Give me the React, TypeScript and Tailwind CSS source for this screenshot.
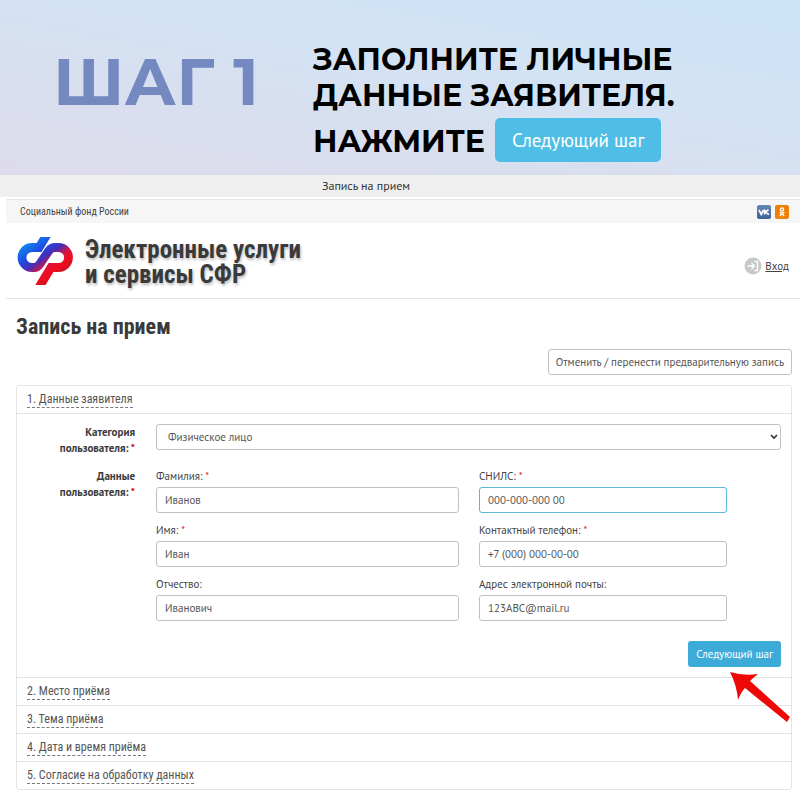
import React from "react";

const body = "font-['PT_Sans','Noto_Sans',sans-serif]";
const condensed = "font-['Roboto_Condensed','Liberation_Sans_Narrow',Roboto,sans-serif]";
const display = "font-['Montserrat',Inter,sans-serif]";

const control =
  "block h-[26px] w-full rounded-[3px] border bg-white text-[11px] leading-4 text-[#555] outline-none";

function Star() {
  return <span className="text-[#e02020]">*</span>;
}

type FieldProps = {
  id: string;
  label: string;
  value: string;
  type?: string;
  required?: boolean;
  active?: boolean;
};

function Field({ id, label, value, type = "text", required, active }: FieldProps) {
  return (
    <div>
      <label htmlFor={id} className="mb-[3px] block text-[11px] leading-4 text-[#444]">
        {label} {required && <Star />}
      </label>
      <input
        id={id}
        type={type}
        defaultValue={value}
        className={`${control} px-2 ${active ? "border-[#5bb8d0]" : "border-[#c0c0c8]"}`}
      />
    </div>
  );
}

function Logo() {
  return (
    <svg viewBox="0 0 56 48" className="h-12 w-14 shrink-0 overflow-hidden" aria-hidden="true">
      <defs>
        <linearGradient id="ribbon" x1="13" y1="2" x2="40" y2="40" gradientUnits="userSpaceOnUse">
          <stop offset="0" stopColor="#108cf2" />
          <stop offset="0.32" stopColor="#1f48e0" />
          <stop offset="0.5" stopColor="#4a2cb4" />
          <stop offset="0.68" stopColor="#d8143c" />
          <stop offset="0.82" stopColor="#f20c20" />
          <stop offset="1" stopColor="#cc1420" />
        </linearGradient>
      </defs>
      <path
        d="M30.9 -4L22 10.5H15A10 10 0 0 0 15 30.5H17Q20.5 30.5 22.5 27.5L32 13.5Q34.5 10.5 38 10.5H41.5A10 10 0 0 1 41.5 30.5H34L21 52"
        fill="none"
        stroke="url(#ribbon)"
        strokeWidth="8.8"
      />
    </svg>
  );
}

function SectionTitle({ children }: { children: React.ReactNode }) {
  return (
    <h2 className="flex h-7 items-center px-[10px] last:h-[27px]">
      <button
        type="button"
        className={`${condensed} border-b border-dashed border-[#777] text-[12px] leading-4 text-[#555]`}
      >
        {children}
      </button>
    </h2>
  );
}

export default function App() {
  return (
    <div className={`${body} min-h-screen bg-white text-[#444]`}>
      <section className="flex h-[175px] bg-[linear-gradient(10deg,#dddbeb_0%,#dadeee_25%,#d2e3f4_65%,#cbe2f7_100%)]">
        <div className={`${display} w-[313px] shrink-0 pt-[42px] pl-[53px] text-[65px] leading-[80px] font-bold text-[#7389c0]`}>
          ШАГ 1
        </div>
        <div className={`${display} pt-[42px] text-[30px] leading-9 font-bold text-black`}>
          <p>ЗАПОЛНИТЕ ЛИЧНЫЕ</p>
          <p>ДАННЫЕ ЗАЯВИТЕЛЯ.</p>
          <p className="mt-1 flex items-center gap-[10px]">
            <span className="pt-1">НАЖМИТЕ</span>
            <button type="button" className={`${body} h-11 rounded-[5px] bg-[#4fbee6] px-[17px] text-[19px] leading-6 font-normal text-white`}>
              Следующий шаг
            </button>
          </p>
        </div>
      </section>

      <div className="flex h-[22px] items-center justify-center bg-[#efefef] pr-[68px] text-[12px] leading-4 text-[#333]">
        Запись на прием
      </div>

      <div className="mt-[2px] ml-[6px]">
        <div className="flex h-6 items-center justify-between border-t border-[#e8e8e8] bg-[#f6f6f6] pr-[11px] pl-[14px]">
          <span className={`${condensed} text-[10px] leading-4`}>Социальный фонд России</span>
          <div className="flex gap-1">
            <a href="#vk" aria-label="ВКонтакте" className="size-[14px] rounded-[2px] bg-linear-to-b from-[#6388b5] to-[#3c6291]">
              <svg viewBox="0 0 14 14" className="size-full fill-none stroke-white" strokeWidth="1.7">
                <path d="M2 5L4.3 9.3L6.3 5M7.5 4.5V9.5M11.5 4.7L8 7L12 9.6" />
              </svg>
            </a>
            <a href="#ok" aria-label="Одноклассники" className="size-[14px] rounded-[2px] bg-[#ee8208]">
              <svg viewBox="0 0 14 14" className="size-full fill-none stroke-white" strokeWidth="1.3">
                <circle cx="7" cy="4.5" r="1.6" />
                <path d="M4.7 7.3C6 8.4 8 8.4 9.3 7.3M7 8.2L4.9 11M7 8.2L9.1 11" />
              </svg>
            </a>
          </div>
        </div>

        <header className="flex h-[76px] items-center justify-between border-b border-[#e4e4e4] pr-[11px] pl-[11px]">
          <div className="flex items-center gap-3">
            <Logo />
            <div className={`${condensed} pt-[2px] text-[25px] leading-[25px] font-bold text-[#3a3a3a] [text-shadow:1px_2px_3px_#bbb]`}>
              Электронные услуги
              <br />и сервисы СФР
            </div>
          </div>
          <a href="#login" className="mt-[10px] flex items-center gap-[3px] text-[11px] leading-4">
            <svg viewBox="0 0 18 18" className="size-[18px] fill-none stroke-white" strokeWidth="1.3" aria-hidden="true">
              <circle cx="9" cy="9" r="8.5" fill="#c8c8c8" stroke="none" />
              <path d="M3.5 9H10M7.5 6L10.5 9L7.5 12M10.5 4.5H13.5V13.5H10.5" />
            </svg>
            <span className="underline">Вход</span>
          </a>
        </header>
      </div>

      <main className="pt-[14px] pr-2 pb-[10px] pl-4">
        <h1 className={`${condensed} text-[22px] leading-7 font-bold text-[#3a3a3a]`}>Запись на прием</h1>
        <div className="mt-2 flex justify-end">
          <button type="button" className="h-[26px] rounded-[3px] border border-[#bfc3c8] px-[7px] text-[11px] leading-4 text-[#555]">
            Отменить / перенести предварительную запись
          </button>
        </div>

        <div className="mt-[10px] divide-y divide-[#e4e4e4] rounded-[3px] border border-[#e4e4e4]">
          <SectionTitle>1. Данные заявителя</SectionTitle>
          <form className="pt-[10px] pr-[10px] pb-[10px]" onSubmit={(e) => e.preventDefault()}>
            <div className="grid grid-cols-[118px_1fr] gap-x-[21px]">
              <label htmlFor="category" className="text-right text-[11px] leading-4 font-bold text-[#3a3a3a]">
                Категория
                <br />
                пользователя: <Star />
              </label>
              <div className="relative">
                <select id="category" defaultValue="person" className={`${control} appearance-none border-[#c0c0c8] px-[11px]`}>
                  <option value="person">Физическое лицо</option>
                </select>
                <svg viewBox="0 0 8 6" className="pointer-events-none absolute top-[10px] right-[3px] h-[6px] w-2 fill-none stroke-[#333]" strokeWidth="1.7">
                  <path d="M1 1L4 4L7 1" />
                </svg>
              </div>
            </div>
            <fieldset className="mt-3 grid grid-cols-[118px_1fr] gap-x-[21px]">
              <div className="text-right text-[11px] leading-4 font-bold text-[#3a3a3a]">
                Данные
                <br />
                пользователя: <Star />
              </div>
              <div className="grid grid-cols-[303fr_248fr] gap-x-5 gap-y-[9px] pr-[54px]">
                <Field id="surname" label="Фамилия:" value="Иванов" required />
                <Field id="snils" label="СНИЛС:" value="000-000-000 00" required active />
                <Field id="name" label="Имя:" value="Иван" required />
                <Field id="phone" label="Контактный телефон:" value="+7 (000) 000-00-00" type="tel" required />
                <Field id="patronymic" label="Отчество:" value="Иванович" />
                <Field id="email" label="Адрес электронной почты:" value="123ABC@mail.ru" type="email" />
              </div>
            </fieldset>
            <div className="mt-5 flex justify-end">
              <div className="relative">
                <button type="submit" className="block h-[26px] rounded-[3px] bg-[#3dabd8] px-2 text-[11px] leading-4 text-white">
                  Следующий шаг
                </button>
                <svg viewBox="0 0 62 54" className="pointer-events-none absolute top-[29px] -right-[10px] h-[54px] w-[62px]" aria-hidden="true">
                  <path d="M1 2Q14 6 29 4Q25 7 21 11L61 47L58 52L16 18Q12 22 9 30Q8 16 1 2Z" fill="#ee0808" />
                </svg>
              </div>
            </div>
          </form>
          <SectionTitle>2. Место приёма</SectionTitle>
          <SectionTitle>3. Тема приёма</SectionTitle>
          <SectionTitle>4. Дата и время приёма</SectionTitle>
          <SectionTitle>5. Согласие на обработку данных</SectionTitle>
        </div>
      </main>
    </div>
  );
}
